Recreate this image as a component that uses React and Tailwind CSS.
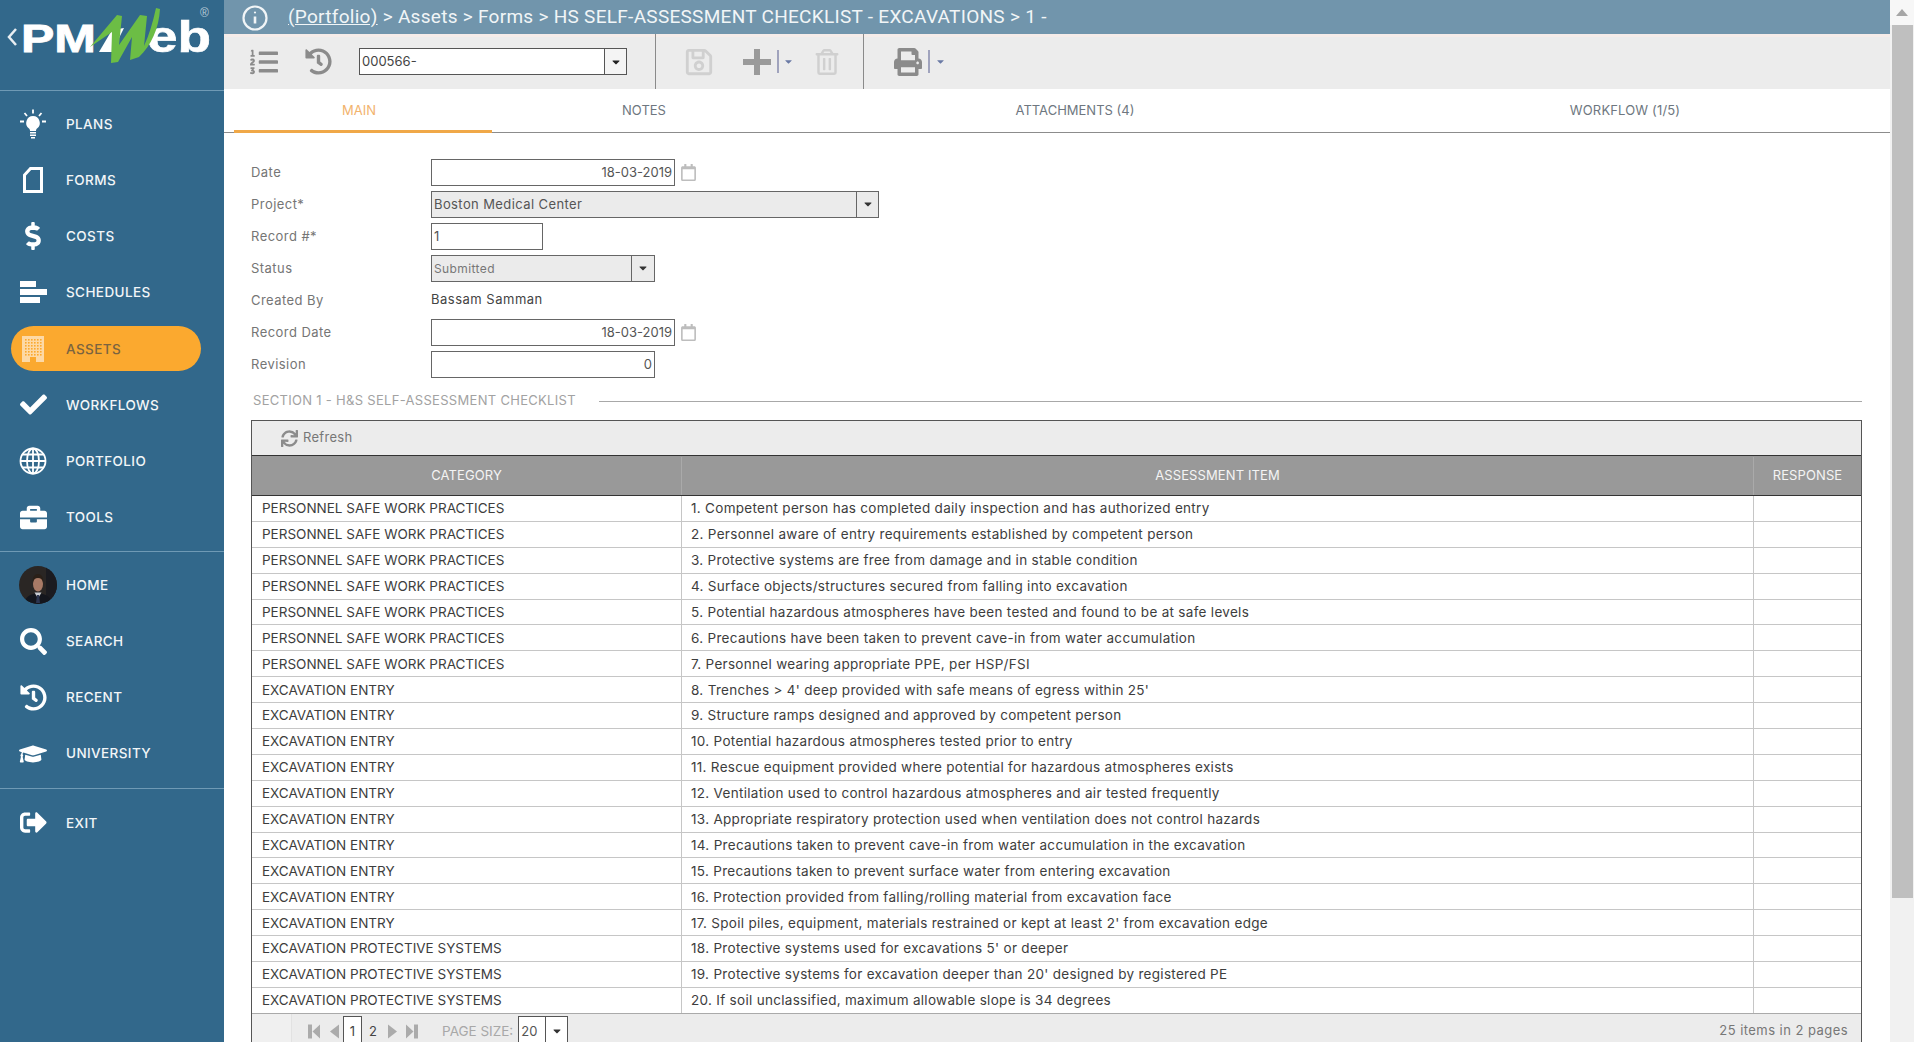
import {
  FaDollarSign, FaCheck, FaBriefcase, FaSearch, FaHistory, FaGraduationCap, FaSignOutAlt,
  FaListOl, FaRegSave, FaRegTrashAlt, FaPrint, FaRegCalendar, FaSync, FaCaretDown,
} from 'react-icons/fa'

const CHECKLIST = [
  ['PERSONNEL SAFE WORK PRACTICES', '1. Competent person has completed daily inspection and has authorized entry'],
  ['PERSONNEL SAFE WORK PRACTICES', '2. Personnel aware of entry requirements established by competent person'],
  ['PERSONNEL SAFE WORK PRACTICES', '3. Protective systems are free from damage and in stable condition'],
  ['PERSONNEL SAFE WORK PRACTICES', '4. Surface objects/structures secured from falling into excavation'],
  ['PERSONNEL SAFE WORK PRACTICES', '5. Potential hazardous atmospheres have been tested and found to be at safe levels'],
  ['PERSONNEL SAFE WORK PRACTICES', '6. Precautions have been taken to prevent cave-in from water accumulation'],
  ['PERSONNEL SAFE WORK PRACTICES', '7. Personnel wearing appropriate PPE, per HSP/FSI'],
  ['EXCAVATION ENTRY', "8. Trenches > 4' deep provided with safe means of egress within 25'"],
  ['EXCAVATION ENTRY', '9. Structure ramps designed and approved by competent person'],
  ['EXCAVATION ENTRY', '10. Potential hazardous atmospheres tested prior to entry'],
  ['EXCAVATION ENTRY', '11. Rescue equipment provided where potential for hazardous atmospheres exists'],
  ['EXCAVATION ENTRY', '12. Ventilation used to control hazardous atmospheres and air tested frequently'],
  ['EXCAVATION ENTRY', '13. Appropriate respiratory protection used when ventilation does not control hazards'],
  ['EXCAVATION ENTRY', '14. Precautions taken to prevent cave-in from water accumulation in the excavation'],
  ['EXCAVATION ENTRY', '15. Precautions taken to prevent surface water from entering excavation'],
  ['EXCAVATION ENTRY', '16. Protection provided from falling/rolling material from excavation face'],
  ['EXCAVATION ENTRY', "17. Spoil piles, equipment, materials restrained or kept at least 2' from excavation edge"],
  ['EXCAVATION PROTECTIVE SYSTEMS', "18. Protective systems used for excavations 5' or deeper"],
  ['EXCAVATION PROTECTIVE SYSTEMS', "19. Protective systems for excavation deeper than 20' designed by registered PE"],
  ['EXCAVATION PROTECTIVE SYSTEMS', '20. If soil unclassified, maximum allowable slope is 34 degrees'],
]

function Logo() {
  return (
    <svg width="224" height="90" viewBox="0 0 224 90">
      <path d="M16 29 L9 37 L16 45" fill="none" stroke="#e8eef2" strokeWidth="2.5" />
      <text x="21" y="52" fontFamily="Liberation Sans" fontWeight="700" fontSize="38" fill="#fff" stroke="#fff" strokeWidth="0.8" textLength="75" lengthAdjust="spacingAndGlyphs">PM</text>
      <path d="M99 52 L112 30 L124 28 L112 52 Z" fill="#fff" />
      <text x="147" y="52" fontFamily="Liberation Sans" fontWeight="700" fontSize="44" fill="#fff" stroke="#fff" strokeWidth="0.6" textLength="64" lengthAdjust="spacingAndGlyphs">eb</text>
      <path d="M90 47 L117 15 L122 16 L119 45 L140 15 L147 16 L144 46 C149 35 153 22 156 8 L160 9 C159 28 151 46 139 57 L130 60 L132 37 L118 62 L111 63 L112 32 Z" fill="#6cbd45" />
      <text x="200" y="17" fontFamily="Liberation Sans" fontSize="12" fill="#b9cbd8">®</text>
    </svg>
  )
}

function BulbIcon() {
  return (
    <svg width="28" height="30" viewBox="0 0 28 30" fill="#fff">
      <path d="M14 7a7 7 0 0 0-4 12.6c.8.7 1 1.6 1 2.4h6c0-.8.2-1.7 1-2.4A7 7 0 0 0 14 7z" />
      <rect x="11" y="23" width="6" height="1.5" />
      <rect x="11" y="25.5" width="6" height="1.5" />
      <rect x="12" y="28" width="4" height="1.5" />
      <path d="M14 0.5v4M5.5 4l2.5 3M22.5 4L20 7M1 12.5h4M23 12.5h4" stroke="#fff" strokeWidth="1.8" />
    </svg>
  )
}

function FormIcon() {
  return (
    <svg width="20" height="26" viewBox="0 0 20 26">
      <path d="M7.5 1.5H18.5V24.5H1.5V8Z" fill="none" stroke="#fff" strokeWidth="3" />
    </svg>
  )
}

function ScheduleIcon() {
  return (
    <svg width="27" height="22" viewBox="0 0 27 22" fill="#fff">
      <rect x="0" y="0" width="16" height="6" />
      <rect x="0" y="8" width="27" height="6" />
      <rect x="0" y="16" width="20" height="6" />
    </svg>
  )
}

function BuildingIcon() {
  const cells = []
  for (let r = 0; r < 6; r++) {
    for (let c = 0; c < 6; c++) {
      cells.push(<rect key={r + '-' + c} x={3 + c * 3} y={3 + r * 3} width="1.6" height="1.6" fill="#fba92f" />)
    }
  }
  return (
    <svg width="22" height="26" viewBox="0 0 22 26">
      <path d="M0 0H22V26H14V21H8V26H0Z" fill="#fdd9a6" />
      {cells}
    </svg>
  )
}

function GlobeIcon() {
  return (
    <svg width="28" height="28" viewBox="0 0 28 28" fill="none" stroke="#fff" strokeWidth="1.8">
      <circle cx="14" cy="14" r="12.5" />
      <ellipse cx="14" cy="14" rx="6" ry="12.5" />
      <path d="M14 1.5v25M1.5 14h25M3.5 7.5h21M3.5 20.5h21" />
    </svg>
  )
}

function Avatar() {
  return (
    <svg width="38" height="38" viewBox="0 0 38 38" className="ml-[10px] shrink-0">
      <clipPath id="avatar-clip"><circle cx="19" cy="19" r="19" /></clipPath>
      <g clipPath="url(#avatar-clip)">
        <rect width="38" height="38" fill="#2a2624" />
        <rect x="27" width="11" height="38" fill="#1b1b20" />
        <path d="M5 38c1-7 6-10 14-11 8 1 13 4 14 11z" fill="#14161d" />
        <path d="M15.5 26.5l3.5 6 3.500-6z" fill="#c9ccd2" />
        <path d="M18 29h2l1 8h-4z" fill="#2c3550" />
        <ellipse cx="19" cy="18" rx="5" ry="7.500" fill="#a87a66" />
        <path d="M14 16c-1-5 2-8 5-8s6 3 5 8c-1-3-2-4-5-4s-4 1-5 4z" fill="#2b2018" />
      </g>
    </svg>
  )
}

function NavItem({ icon, label, active }) {
  return (
    <div className="h-[56.15px] flex items-center">
      <div className={`h-[45px] w-[190px] mx-[11px] flex items-center rounded-full ${active ? 'bg-[#fba92f]' : ''}`}>
        <div className="w-[44px] flex justify-center items-center shrink-0 text-white">{icon}</div>
        <span className={`ml-[11px] text-[13.5px] font-medium tracking-[0.4px] ${active ? 'text-[#7a6440]' : 'text-[#f2f6f8]'}`}>{label}</span>
      </div>
    </div>
  )
}

function Sidebar() {
  return (
    <aside className="w-[224px] shrink-0 h-full bg-[#32688b]">
      <div className="h-[91px] border-b border-[#6f9ab5]">
        <Logo />
      </div>
      <div className="pt-[5px] pb-[6px] border-b border-[#6f9ab5]">
        <NavItem icon={<BulbIcon />} label="PLANS" />
        <NavItem icon={<FormIcon />} label="FORMS" />
        <NavItem icon={<FaDollarSign size={28} />} label="COSTS" />
        <NavItem icon={<ScheduleIcon />} label="SCHEDULES" />
        <NavItem icon={<BuildingIcon />} label="ASSETS" active />
        <NavItem icon={<FaCheck size={27} />} label="WORKFLOWS" />
        <NavItem icon={<GlobeIcon />} label="PORTFOLIO" />
        <NavItem icon={<FaBriefcase size={27} />} label="TOOLS" />
      </div>
      <div className="pt-[5px] pb-[6px] border-b border-[#6f9ab5]">
        <NavItem icon={<Avatar />} label="HOME" />
        <NavItem icon={<FaSearch size={27} />} label="SEARCH" />
        <NavItem icon={<FaHistory size={27} />} label="RECENT" />
        <NavItem icon={<FaGraduationCap size={28} />} label="UNIVERSITY" />
      </div>
      <div className="pt-[6px]">
        <NavItem icon={<FaSignOutAlt size={27} />} label="EXIT" />
      </div>
    </aside>
  )
}

function Toolbar() {
  return (
    <div className="h-[55px] bg-[#ececec] border-t-[3px] border-[#f5ece9] flex items-center pl-[26px] pb-[3px] shrink-0 -mt-px">
      <FaListOl size={28} className="text-[#8b8b8b] shrink-0" />
      <FaHistory size={27} className="text-[#8b8b8b] ml-[27px] shrink-0" />
      <div className="ml-[27px] w-[268px] h-[27px] bg-white border border-[#555] flex items-center shrink-0">
        <span className="flex-1 pl-[2px] text-[13px] text-[#444]">000566-</span>
        <span className="w-[22px] h-full border-l border-[#555] flex items-center justify-center bg-[#f4f4f4]">
          <FaCaretDown size={12} className="text-[#222]" />
        </span>
      </div>
      <div className="ml-[28px] w-px self-stretch -mt-[3px] -mb-[3px] bg-[#8a8a8a]" />
      <FaRegSave size={30} className="ml-[28px] text-[#d0d0d0] shrink-0" />
      <svg width="28" height="26" viewBox="0 0 28 26" fill="#9a9a9a" className="ml-[29px] shrink-0">
        <rect x="0" y="10" width="28" height="6" />
        <rect x="11" y="0" width="6" height="26" />
      </svg>
      <div className="ml-[6px] w-[2px] h-[23px] bg-[#a0a3bd]" />
      <FaCaretDown size={11} className="ml-[4px] text-[#6a7aa5]" />
      <FaRegTrashAlt size={26} className="ml-[20px] text-[#d0d0d0] shrink-0" />
      <div className="ml-[23px] w-px self-stretch -mt-[3px] -mb-[3px] bg-[#8a8a8a]" />
      <FaPrint size={28} className="ml-[30px] text-[#8b8b8b] shrink-0" />
      <div className="ml-[6px] w-[2px] h-[23px] bg-[#a0a3bd]" />
      <FaCaretDown size={11} className="ml-[5px] text-[#6a7aa5]" />
    </div>
  )
}

function Tabs() {
  return (
    <div className="h-[44px] shrink-0 border-b border-[#8c8c8c] flex pl-[10px] text-[13px] text-[#6e7780]">
      <div className="w-[258px] h-[44px] pt-[3px] pr-[8px] flex items-center justify-center border-b-[3px] border-[#f0a848] text-[#f2b36d]">MAIN</div>
      <div className="w-[304px] flex items-center justify-center">NOTES</div>
      <div className="w-[558px] flex items-center justify-center">ATTACHMENTS (4)</div>
      <div className="flex-1 flex items-center justify-center pl-[6px] tracking-[0.15px]">WORKFLOW (1/5)</div>
    </div>
  )
}

function Field({ label, children }) {
  return (
    <div className="h-[32px] flex items-center">
      <div className="w-[180px] shrink-0 pt-[1px] text-[13px] tracking-[0.45px] text-[#757575]">{label}</div>
      {children}
    </div>
  )
}

function DateInput() {
  return (
    <>
      <div className="w-[244px] h-[27px] pt-[1px] bg-white border border-[#666] flex items-center justify-end pr-[2px] text-[13px] text-[#555]">18-03-2019</div>
      <FaRegCalendar size={17} className="ml-[5px] text-[#bdbdbd]" />
    </>
  )
}

function SelectBox({ value, width, arrow, muted }) {
  return (
    <div className={`${width} h-[27px] bg-[#ebebeb] border border-[#666] flex items-center`}>
      <span className={`flex-1 pl-[2px] pt-[1px] tracking-[0.4px] ${muted ? 'text-[12px] text-[#777]' : 'text-[13px] text-[#555]'}`}>{value}</span>
      <span className={`${arrow} h-full border-l border-[#666] flex items-center justify-center`}>
        <FaCaretDown size={12} className="text-[#333]" />
      </span>
    </div>
  )
}

function PagerIcon({ d, className }) {
  return (
    <svg width="12" height="17" viewBox="0 0 12 16" fill="#ababab" className={`shrink-0 ${className}`}><path d={d} /></svg>
  )
}

function ChecklistGrid() {
  return (
    <div className="border border-b-0 border-[#555]">
      <div className="h-[34px] bg-[#ececec] flex items-center pl-[29px] text-[13px] tracking-[0.3px] text-[#777]">
        <FaSync size={17} className="text-[#8c8c8c]" />
        <span className="ml-[5px]">Refresh</span>
      </div>
      <div className="grid grid-cols-[430px_1072px_1fr] h-[41px] pt-[1px] bg-[#999] border-y border-[#333] text-[13px] tracking-[0.1px] text-[#f4f4f4]">
        <div className="flex items-center justify-center border-r border-[#aaa]">CATEGORY</div>
        <div className="flex items-center justify-center border-r border-[#aaa]">ASSESSMENT ITEM</div>
        <div className="flex items-center justify-center">RESPONSE</div>
      </div>
      {CHECKLIST.map(([category, item]) => (
        <div key={item} className="grid grid-cols-[430px_1072px_1fr] h-[25.9px] border-b border-[#c6c6c6] text-[13.5px] text-[#3d3d3d]">
          <div className="flex items-center pl-[10px] border-r border-[#c6c6c6]">{category}</div>
          <div className="flex items-center pl-[9px] border-r border-[#c6c6c6] tracking-[0.3px]">{item}</div>
          <div />
        </div>
      ))}
      <div className="h-[40px] -mt-px bg-[#ececec] border-t border-[#aaa] flex items-start text-[13px] text-[#777]">
        <div className="w-[40px] h-full border-r border-[#e2e2e2] bg-[#f0f0f0]" />
        <div className="flex items-center h-[30px] pt-[5px]">
          <PagerIcon d="M0 1h4v14H0zM12 1v14L4.5 8z" className="ml-[16px]" />
          <PagerIcon d="M11 1v14L2 8z" className="ml-[8px]" />
          <span className="ml-[3px] w-[19px] h-[30px] border border-[#555] bg-white flex items-center justify-center text-[#444]">1</span>
          <span className="ml-[4px] w-[14px] text-center text-[#444]">2</span>
          <PagerIcon d="M1 1v14l9-7z" className="ml-[7px]" />
          <PagerIcon d="M0 1v14l7.500-7zM8 1h4v14H8z" className="ml-[7px]" />
          <span className="ml-[24px] text-[#a8a8a8] text-[13.5px]">PAGE SIZE:</span>
          <span className="ml-[5px] w-[50px] h-[30px] border border-[#555] bg-white flex items-center text-[#555]">
            <span className="flex-1 pl-[2px]">20</span>
            <span className="w-[22px] h-full border-l border-[#555] flex items-center justify-center">
              <FaCaretDown size={12} className="text-[#333]" />
            </span>
          </span>
        </div>
        <div className="ml-auto mr-[13px] h-[30px] pt-[7px] tracking-[0.45px] text-[#777]">25 items in 2 pages</div>
      </div>
    </div>
  )
}

function Scrollbar() {
  return (
    <div className="w-[24px] shrink-0 h-full bg-[#f1f1f1] flex flex-col items-center">
      <div className="h-[25px] w-full bg-[#f7f7f7] flex items-center justify-center">
        <svg width="12" height="7" viewBox="0 0 12 7" fill="#a6a6a6"><path d="M6 0l6 7H0z" /></svg>
      </div>
      <div className="w-[21px] h-[873px] bg-[#bfbfbf]" />
    </div>
  )
}

export default function App() {
  return (
    <div className="w-[1914px] h-[1042px] flex overflow-hidden bg-white font-['Inter',sans-serif]">
      <Sidebar />
      <main className="flex-1 min-w-0 h-full flex flex-col overflow-hidden">
        <header className="h-[35px] shrink-0 bg-[#7195ac] flex items-center pl-[18px] text-[#f1f5f7] font-['Roboto',sans-serif] text-[19px] tracking-[0.29px]">
          <svg width="26" height="26" viewBox="0 0 26 26" fill="none" stroke="#f1f5f7" strokeWidth="2.2" className="shrink-0">
            <circle cx="13" cy="13" r="11.5" />
            <path d="M13 11.5v7" strokeWidth="2.6" />
            <circle cx="13" cy="7.500" r="1.1" fill="#f1f5f7" stroke="none" />
          </svg>
          <span className="ml-[20px]"><span className="underline">(Portfolio)</span> &gt; Assets &gt; Forms &gt; HS SELF-ASSESSMENT CHECKLIST - EXCAVATIONS &gt; 1 -</span>
        </header>
        <Toolbar />
        <Tabs />
        <div className="flex-1 min-h-0 pl-[27px] pr-[28px] pt-[23px]">
          <Field label="Date"><DateInput /></Field>
          <Field label="Project*"><SelectBox value="Boston Medical Center" width="w-[448px]" arrow="w-[22px]" /></Field>
          <Field label="Record #*">
            <div className="w-[112px] h-[27px] pt-[1px] bg-white border border-[#666] flex items-center pl-[2px] text-[13px] text-[#555]">1</div>
          </Field>
          <Field label="Status"><SelectBox value="Submitted" width="w-[224px]" arrow="w-[23px]" muted /></Field>
          <Field label="Created By"><span className="text-[13px] tracking-[0.5px] text-[#444]">Bassam Samman</span></Field>
          <Field label="Record Date"><DateInput /></Field>
          <Field label="Revision">
            <div className="w-[224px] h-[27px] pt-[1px] bg-white border border-[#666] flex items-center justify-end pr-[2px] text-[13px] text-[#555]">0</div>
          </Field>
          <div className="mt-[11px] mb-[9px] h-[20px] flex items-center pl-[2px]">
            <span className="text-[13px] tracking-[0.3px] text-[#a2a2a2]">SECTION 1 - H&amp;S SELF-ASSESSMENT CHECKLIST</span>
            <div className="ml-[23px] flex-1 h-px bg-[#a8a8a8]" />
          </div>
          <ChecklistGrid />
        </div>
      </main>
      <Scrollbar />
    </div>
  )
}
